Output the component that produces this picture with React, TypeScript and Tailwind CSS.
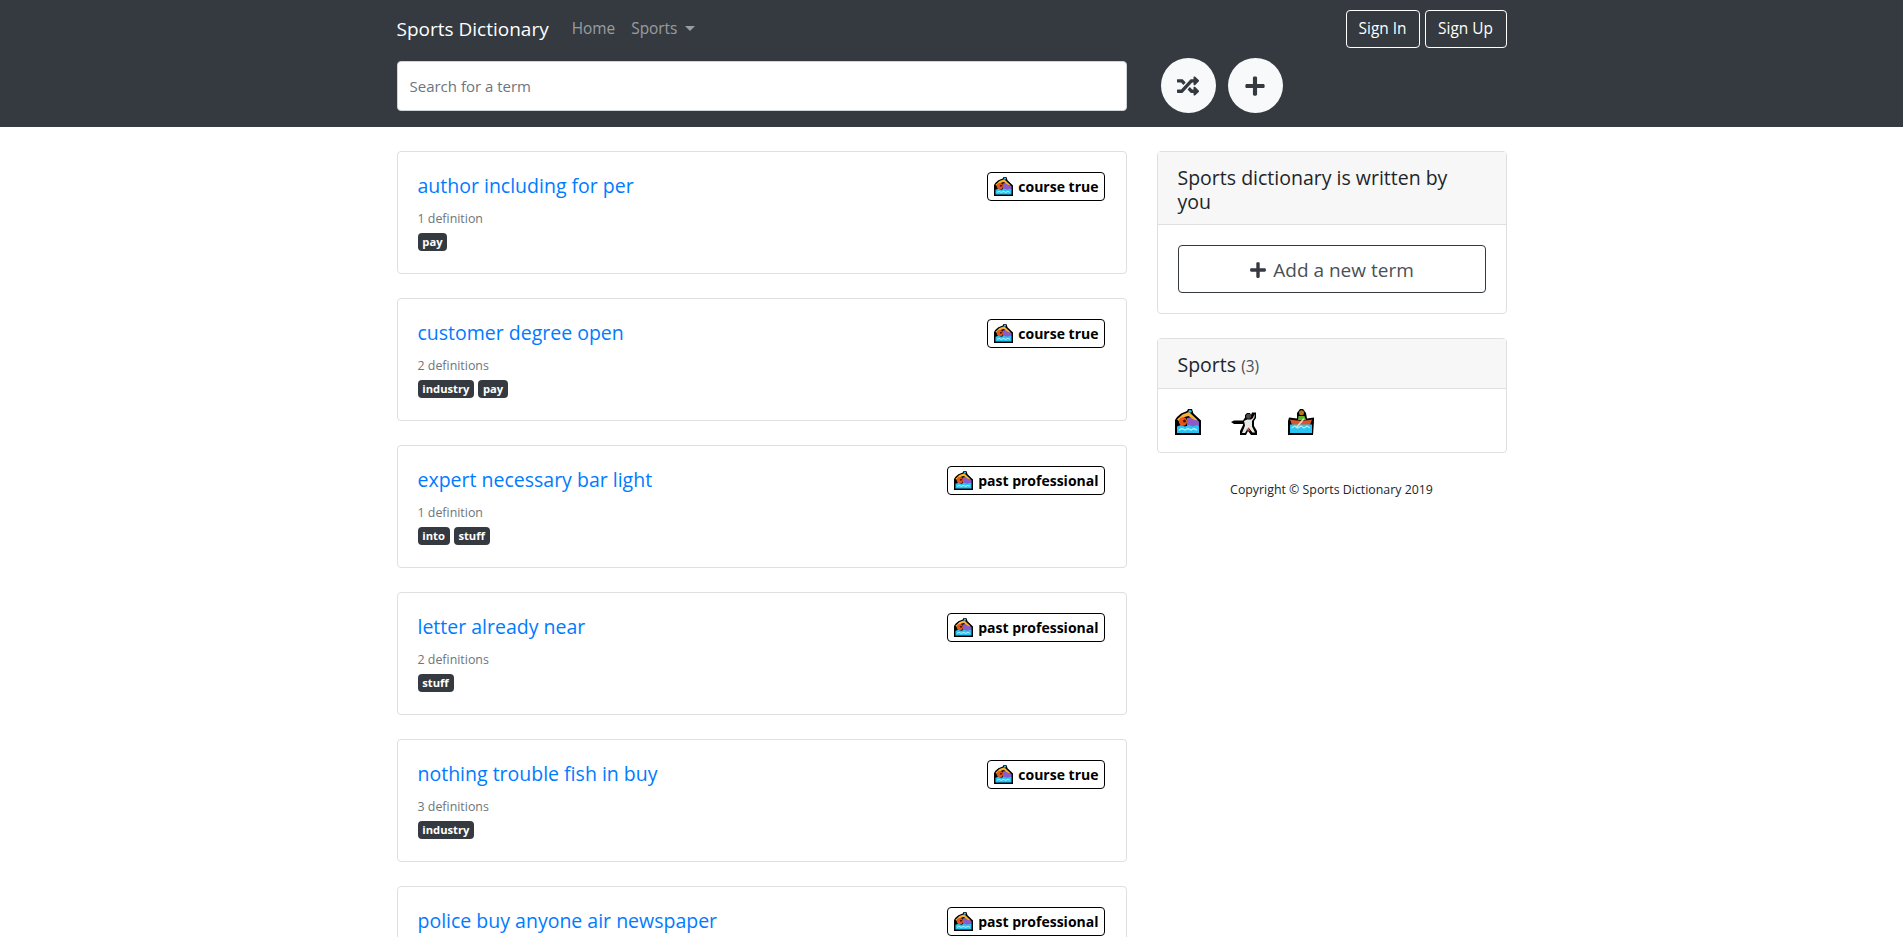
import { FaPlus, FaRandom } from 'react-icons/fa'

function SwimmerIcon({ className }: { className?: string }) {
  return (
    <svg viewBox="0 0 26 26" className={className}>
      <path d="M0 26V11l2-3 4-3.500 6-2.500L13 0h4l1.500 4.500L26 11.500V26Z" fill="#000" />
      <path d="M12 9l5-1 7 4.500V18H12Z" fill="#8a5cc7" />
      <path d="M2 10.500 7.500 5.500 14 3l9 8.500-3.500-.5L13.500 7 9.500 8l-5 4.500Z" fill="#f9b233" />
      <circle cx="8" cy="12.500" r="4.200" fill="#e8541e" />
      <circle cx="9.500" cy="12" r="1.500" fill="#3a1a0a" />
      <circle cx="15" cy="2.300" r="1.500" fill="#35b8e8" />
      <path d="M2 17.500l4-1.500 4 1.500 4-1.500 4 1.500 4-1.500 2 1.500V24H2Z" fill="#29c4f2" />
      <path d="M4 21l3-1.500 3 1.500 3-1.500 3 1.500 3-1.500 3 1.500" fill="none" stroke="#a5ecfc" strokeWidth="1.400" />
    </svg>
  )
}

function FencerIcon({ className }: { className?: string }) {
  return (
    <svg viewBox="0 0 26 26" className={className}>
      <path d="M0 13 3 11.500h9l2-3V6l2-2h3l1 2 1-2.500h4V9l-2 3v5l3 5v4h-6l-3-4-2 4H9v-4l3-6v-1H3Z" fill="#000" />
      <path d="M13 12l3-1.500h4l2-1.500 1.500-4v3.500L21 12v5.500l3 6h-2.500l-4-5-3.500 5.500h-3l3-7.500Z" fill="#e8e8e8" />
      <circle cx="17.500" cy="7.200" r="2.500" fill="#4a4a4a" />
      <path d="M15 21l2.500-2 1.500 3Z" fill="#e0523c" />
    </svg>
  )
}

function RowboatIcon({ className }: { className?: string }) {
  return (
    <svg viewBox="0 0 26 26" className={className}>
      <path d="M0 26V12l1-3.500 8 1V4l3-4h3l3 4 1 5.500 7-1 0 3.500-1 14.500Z" fill="#000" />
      <circle cx="13.500" cy="3.800" r="2.500" fill="#b5791c" />
      <path d="M10.500 7h6l1.500 4h-8Z" fill="#5cb531" />
      <path d="M2 10.500c5 1.500 17 1.500 22 0l-2 5.500H4Z" fill="#d9582b" />
      <path d="M2 15.500h22v8.500H2Z" fill="#29c4f2" />
      <path d="M3.500 19l3.500-2 3 2 3-2 3 2 3-2 3 2" fill="none" stroke="#a5ecfc" strokeWidth="1.400" />
      <path d="M16 9.500 8 19" stroke="#f3d2b3" strokeWidth="1.600" />
    </svg>
  )
}

const terms = [
  { title: 'author including for per', count: '1 definition', tags: ['pay'], sport: 'course true' },
  { title: 'customer degree open', count: '2 definitions', tags: ['industry', 'pay'], sport: 'course true' },
  { title: 'expert necessary bar light', count: '1 definition', tags: ['into', 'stuff'], sport: 'past professional' },
  { title: 'letter already near', count: '2 definitions', tags: ['stuff'], sport: 'past professional' },
  { title: 'nothing trouble fish in buy', count: '3 definitions', tags: ['industry'], sport: 'course true' },
  { title: 'police buy anyone air newspaper', count: '1 definition', tags: ['pay'], sport: 'past professional' },
]

function TermCard({ term }: { term: (typeof terms)[number] }) {
  return (
    <div className="mb-6 h-[123px] rounded border border-[#dfdfdf] bg-white p-5">
      <div className="flex items-start justify-between">
        <a className="pt-[2px] text-[19.5px] leading-[24px] font-medium text-[#007bff]">{term.title}</a>
        <span className="mr-px flex h-[29px] items-center gap-[5px] rounded border border-black pr-[5px] pl-[6px] text-[14px] font-bold text-black">
          <SwimmerIcon className="h-[19px] w-[19px]" />
          {term.sport}
        </span>
      </div>
      <div className="mt-[8px] text-[12.4px] leading-[19px] text-[#6c757d]">{term.count}</div>
      <div className="mt-[5px] flex gap-[4px]">
        {term.tags.map((tag) => (
          <span key={tag} className="rounded-[4px] bg-[#343a40] px-[4.800px] py-[3px] text-[11.2px] leading-[12px] font-bold text-white">
            {tag}
          </span>
        ))}
      </div>
    </div>
  )
}

export default function App() {
  return (
    <div className="h-screen overflow-hidden bg-white font-['Open_Sans','Noto_Sans',sans-serif] text-[16px] text-[#212529]">
      <nav className="h-[127px] bg-[#343a40]">
        <div className="mx-auto w-[1140px] px-[15px]">
          <div className="flex h-[58px] items-center justify-between">
            <div className="flex items-center">
              <span className="text-[19px] text-white">Sports Dictionary</span>
              <span className="ml-[23px] pb-[1px] text-[15.4px] text-[rgba(255,255,255,0.5)]">Home</span>
              <span className="ml-[16px] flex items-center pb-[1px] text-[15.4px] text-[rgba(255,255,255,0.5)]">
                Sports
                <span className="ml-[8px] h-0 w-0 border-x-[5px] border-t-[5px] border-x-transparent border-t-[rgba(255,255,255,0.5)]" />
              </span>
            </div>
            <div className="flex gap-[5px]">
              <button className="h-[38px] w-[74px] rounded border border-white text-[15.4px] text-white">Sign In</button>
              <button className="h-[38px] w-[82px] rounded border border-white text-[15.4px] text-white">Sign Up</button>
            </div>
          </div>
          <div className="flex items-center">
            <input
              placeholder="Search for a term"
              className="h-[50px] w-[730px] rounded border border-[#ced4da] bg-white px-3 text-[15px] placeholder:text-[#6c757d]"
            />
            <button className="ml-[34px] flex h-[55px] w-[55px] items-center justify-center rounded-full bg-[#f8f9fa]">
              <FaRandom className="text-[22px] text-[#343a40]" />
            </button>
            <button className="ml-[12px] flex h-[55px] w-[55px] items-center justify-center rounded-full bg-[#f8f9fa]">
              <FaPlus className="text-[22px] text-[#343a40]" />
            </button>
          </div>
        </div>
      </nav>

      <div className="mx-auto flex w-[1140px] gap-[30px] px-[15px] pt-6">
        <main className="w-[730px]">
          {terms.map((term) => (
            <TermCard key={term.title} term={term} />
          ))}
        </main>

        <aside className="w-[350px]">
          <div className="mb-6 rounded border border-[#dfdfdf]">
            <div className="border-b border-[#dfdfdf] bg-[#f7f7f7] px-5 pt-[14px] pb-[10px] text-[19.5px] leading-[24px] font-medium">
              Sports dictionary is written by you
            </div>
            <div className="p-5">
              <button className="flex h-[48px] w-full items-center justify-center gap-[6px] rounded border border-[#343a40] pt-[2px] text-[19px] text-[#495057]">
                <FaPlus className="text-[18px] text-[#343a40]" />
                Add a new term
              </button>
            </div>
          </div>

          <div className="rounded border border-[#dfdfdf]">
            <div className="border-b border-[#dfdfdf] bg-[#f7f7f7] px-5 pt-[14px] pb-[9px] text-[19.5px] leading-[24px] font-medium">
              Sports <span className="text-[15.4px] font-normal text-[#495057]">(3)</span>
            </div>
            <div className="flex gap-[30.500px] pt-5 pb-[17px] pl-[17px]">
              <SwimmerIcon className="h-[26px] w-[26px]" />
              <FencerIcon className="h-[26px] w-[26px]" />
              <RowboatIcon className="h-[26px] w-[26px]" />
            </div>
          </div>

          <p className="mt-[28px] text-center text-[12.35px] text-[#212529]">Copyright © Sports Dictionary 2019</p>
        </aside>
      </div>
    </div>
  )
}
